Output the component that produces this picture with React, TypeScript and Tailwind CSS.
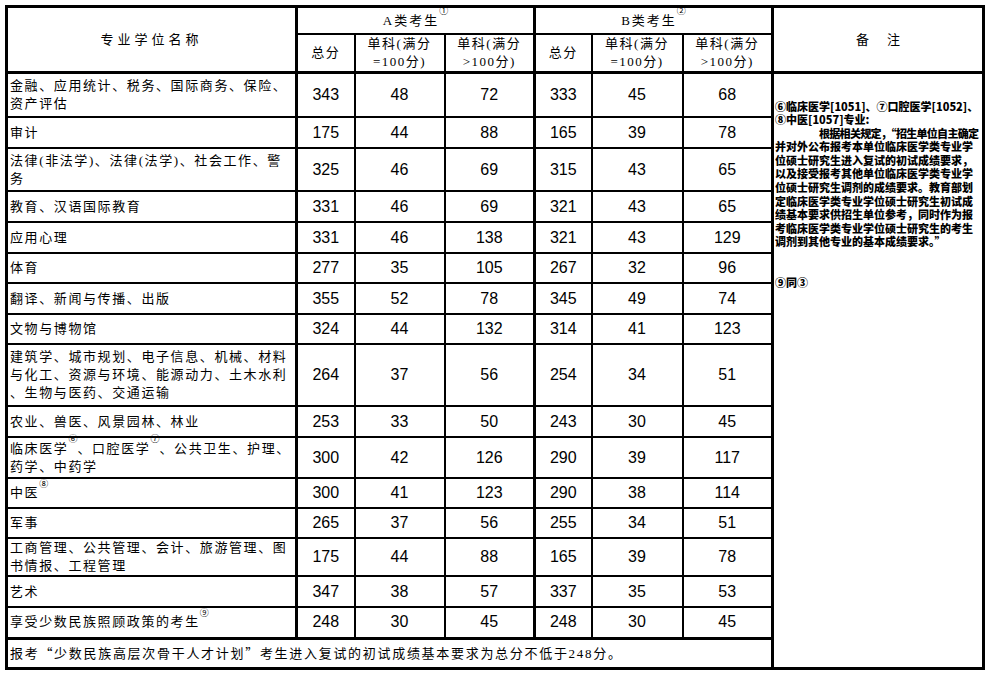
import React from 'react';

interface Row {
  name: React.ReactNode[];
  h: string;
  a: number[];
  b: number[];
}

const Sup: React.FC<{ children: React.ReactNode }> = ({ children }) => (
  <sup className="text-[9px] align-[6px] tracking-normal">{children}</sup>
);

// full-width quote marks, the serif face only has narrow ones
const Q: React.FC<{ children: React.ReactNode }> = ({ children }) => (
  <span className="font-['Noto_Sans_CJK_SC',sans-serif]">{children}</span>
);

const rows: Row[] = [
  { name: ['金融、应用统计、税务、国际商务、保险、', '资产评估'], h: 'h-[45px]', a: [343, 48, 72], b: [333, 45, 68] },
  { name: ['审计'], h: 'h-[31px]', a: [175, 44, 88], b: [165, 39, 78] },
  { name: ['法律(非法学)、法律(法学)、社会工作、警', '务'], h: 'h-[43px]', a: [325, 46, 69], b: [315, 43, 65] },
  { name: ['教育、汉语国际教育'], h: 'h-[31px]', a: [331, 46, 69], b: [321, 43, 65] },
  { name: ['应用心理'], h: 'h-[31px]', a: [331, 46, 138], b: [321, 43, 129] },
  { name: ['体育'], h: 'h-[30px]', a: [277, 35, 105], b: [267, 32, 96] },
  { name: ['翻译、新闻与传播、出版'], h: 'h-[31px]', a: [355, 52, 78], b: [345, 49, 74] },
  { name: ['文物与博物馆'], h: 'h-[30px]', a: [324, 44, 132], b: [314, 41, 123] },
  {
    name: ['建筑学、城市规划、电子信息、机械、材料', '与化工、资源与环境、能源动力、土木水利', '、生物与医药、交通运输'],
    h: 'h-[62px]',
    a: [264, 37, 56],
    b: [254, 34, 51],
  },
  { name: ['农业、兽医、风景园林、林业'], h: 'h-[31px]', a: [253, 33, 50], b: [243, 30, 45] },
  {
    name: [
      <>临床医学<Sup>⑥</Sup>、口腔医学<Sup>⑦</Sup>、公共卫生、护理、</>,
      '药学、中药学',
    ],
    h: 'h-[41px]',
    a: [300, 42, 126],
    b: [290, 39, 117],
  },
  { name: [<>中医<Sup>⑧</Sup></>], h: 'h-[30px]', a: [300, 41, 123], b: [290, 38, 114] },
  { name: ['军事'], h: 'h-[30px]', a: [265, 37, 56], b: [255, 34, 51] },
  { name: ['工商管理、公共管理、会计、旅游管理、图', '书情报、工程管理'], h: 'h-[36px]', a: [175, 44, 88], b: [165, 39, 78] },
  { name: ['艺术'], h: 'h-[31px]', a: [347, 38, 57], b: [337, 35, 53] },
  { name: [<>享受少数民族照顾政策的考生<Sup>⑨</Sup></>], h: 'h-[31px]', a: [248, 30, 45], b: [248, 30, 45] },
];

const remarkLines = [
  '并对外公布报考本单位临床医学类专业学',
  '位硕士研究生进入复试的初试成绩要求，',
  '以及接受报考其他单位临床医学类专业学',
  '位硕士研究生调剂的成绩要求。教育部划',
  '定临床医学类专业学位硕士研究生初试成',
  '绩基本要求供招生单位参考，同时作为报',
  '考临床医学类专业学位硕士研究生的考生',
  '调剂到其他专业的基本成绩要求。”',
];

const cjk = "font-['Liberation_Serif','Noto_Sans_CJK_SC',serif]";
const num = "font-['Liberation_Sans','Noto_Sans_CJK_SC',sans-serif]";

const App: React.FC = () => {
  const cell = 'border-2 border-black p-0';
  const numCell = `${cell} ${num} text-[16px] text-center align-middle text-black`;

  return (
    <div className="min-h-screen bg-white pl-[5px] pt-[5px]">
      <table className={`w-[977px] table-fixed border-collapse border-[3px] border-black ${cjk} text-black`}>
        <colgroup>
          <col className="w-[290px]" />
          <col className="w-[58px]" />
          <col className="w-[90px]" />
          <col className="w-[90px]" />
          <col className="w-[57px]" />
          <col className="w-[91px]" />
          <col className="w-[90px]" />
          <col className="w-[211px]" />
        </colgroup>
        <tbody>
          {/* Header */}
          <tr className="h-[27px]">
            <td rowSpan={2} className={`${cell} border-[3px] text-center text-[13px] tracking-[4px]`}>
              专业学位名称
            </td>
            <td colSpan={3} className={`${cell} border-r-[3px] text-center text-[13px] tracking-[2px]`}>
              A类考生<Sup>①</Sup>
            </td>
            <td colSpan={3} className={`${cell} border-r-[3px] text-center text-[13px] tracking-[2px]`}>
              B类考生<Sup>②</Sup>
            </td>
            <td rowSpan={2} className={`${cell} border-[3px] text-center text-[13px]`}>
              备<span className="inline-block w-[18px]" />注
            </td>
          </tr>
          <tr className="h-[38px] text-[13px] leading-[18px] tracking-[1.5px]">
            <td className={`${cell} text-center`}>总分</td>
            <td className={`${cell} text-center`}>
              单科(满分
              <br />
              =100分)
            </td>
            <td className={`${cell} border-r-[3px] text-center`}>
              单科(满分
              <br />
              &gt;100分)
            </td>
            <td className={`${cell} text-center`}>总分</td>
            <td className={`${cell} text-center`}>
              单科(满分
              <br />
              =100分)
            </td>
            <td className={`${cell} border-r-[3px] text-center`}>
              单科(满分
              <br />
              &gt;100分)
            </td>
          </tr>

          {/* Data rows */}
          {rows.map((row, i) => (
            <tr key={i} className={row.h}>
              <td className={`${cell} border-r-[3px] ${i === 0 ? 'border-t-[3px]' : ''} pl-[2px] align-middle text-[13px] leading-[18px] tracking-[1.6px] whitespace-nowrap`}>
                {row.name.map((line, j) => (
                  <div key={j}>{line}</div>
                ))}
              </td>
              {row.a.map((v, j) => (
                <td key={'a' + j} className={`${numCell} ${j === 2 ? 'border-r-[3px]' : ''} ${i === 0 ? 'border-t-[3px]' : ''}`}>
                  {v}
                </td>
              ))}
              {row.b.map((v, j) => (
                <td key={'b' + j} className={`${numCell} ${j === 2 ? 'border-r-[3px]' : ''} ${i === 0 ? 'border-t-[3px]' : ''}`}>
                  {v}
                </td>
              ))}
              {i === 0 && (
                <td rowSpan={rows.length + 1} className={`${cell} border-[3px] align-top`}>
                  <div className="pt-[26px] pl-[1px] text-[11px] leading-[13.6px] font-black whitespace-nowrap font-['Noto_Sans_CJK_SC',sans-serif]">
                    <div>⑥临床医学[1051]、⑦口腔医学[1052]、</div>
                    <div>⑧中医[1057]专业:</div>
                    <div className="pl-[44px] tracking-[-0.7px]">根据相关规定，“招生单位自主确定</div>
                    {remarkLines.map((l, k) => (
                      <div key={k}>{l}</div>
                    ))}
                    <div className="mt-[27px]">⑨同③</div>
                  </div>
                </td>
              )}
            </tr>
          ))}

          {/* Footer */}
          <tr className="h-[30px]">
            <td colSpan={7} className={`${cell} border-[3px] pl-[2px] text-[13px] tracking-[1.7px] whitespace-nowrap align-middle`}>
              报考<Q>“</Q>少数民族高层次骨干人才计划<Q>”</Q>考生进入复试的初试成绩基本要求为总分不低于248分。
            </td>
          </tr>
        </tbody>
      </table>
    </div>
  );
};

export default App;
